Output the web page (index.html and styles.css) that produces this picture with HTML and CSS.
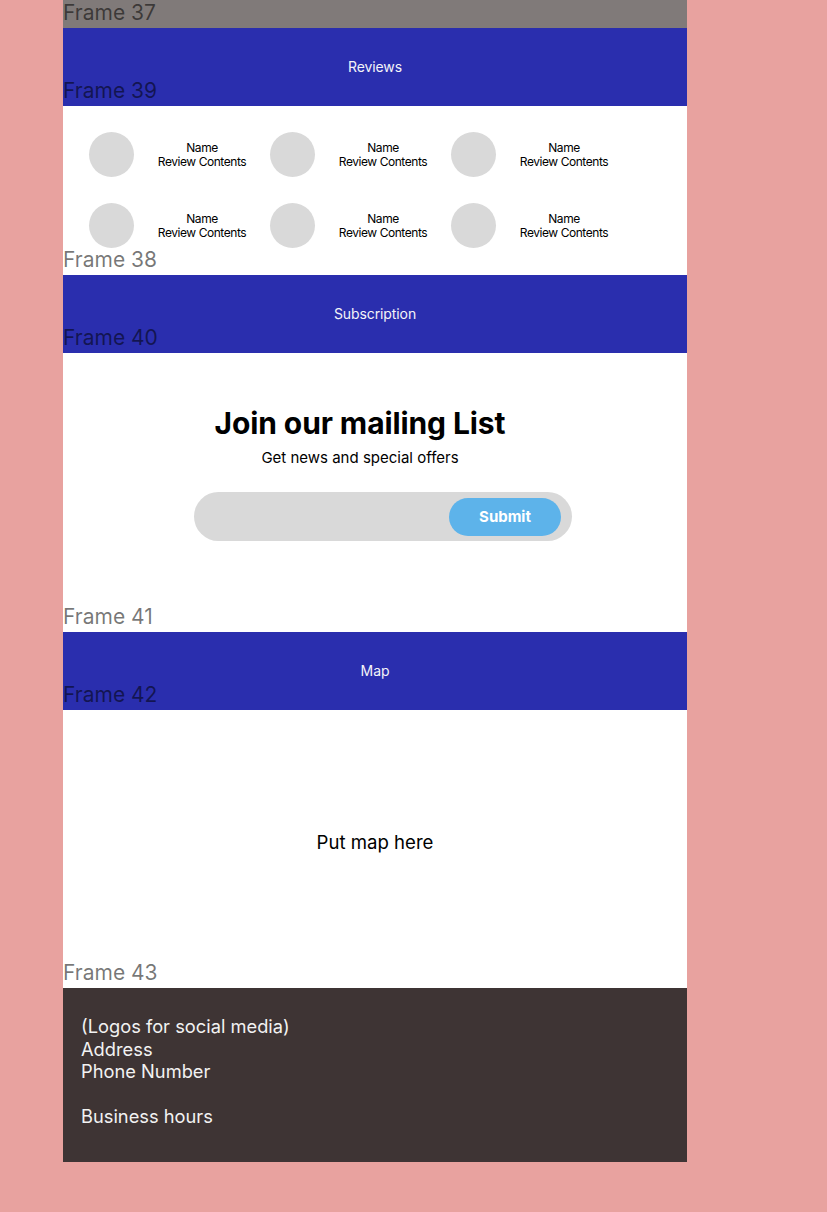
FILE: index.html
```html
<!DOCTYPE html>
<html lang="en">
<head>
<meta charset="utf-8">
<title>Frames</title>
<link rel="stylesheet" href="styles.css">
</head>
<body>
<div class="canvas">
  <div class="top-band"></div>

  <section class="frame bar">
    <span class="frame-label">Frame 37</span>
    <span class="bar-title">Reviews</span>
  </section>

  <section class="frame reviews">
    <span class="frame-label">Frame 39</span>
    <div class="review-grid">
      <div class="review"><div class="avatar"></div><div class="review-text"><span>Name</span><span>Review Contents</span></div></div>
      <div class="review"><div class="avatar"></div><div class="review-text"><span>Name</span><span>Review Contents</span></div></div>
      <div class="review"><div class="avatar"></div><div class="review-text"><span>Name</span><span>Review Contents</span></div></div>
      <div class="review"><div class="avatar"></div><div class="review-text"><span>Name</span><span>Review Contents</span></div></div>
      <div class="review"><div class="avatar"></div><div class="review-text"><span>Name</span><span>Review Contents</span></div></div>
      <div class="review"><div class="avatar"></div><div class="review-text"><span>Name</span><span>Review Contents</span></div></div>
    </div>
  </section>

  <section class="frame bar">
    <span class="frame-label">Frame 38</span>
    <span class="bar-title">Subscription</span>
  </section>

  <section class="frame subscribe">
    <span class="frame-label">Frame 40</span>
    <div class="subscribe-text">
      <h2 class="subscribe-title">Join our mailing List</h2>
      <p class="subscribe-sub">Get news and special offers</p>
    </div>
    <form class="subscribe-form">
      <input class="subscribe-input" type="email" aria-label="Email">
      <button class="subscribe-btn" type="button">Submit</button>
    </form>
  </section>

  <section class="frame bar">
    <span class="frame-label">Frame 41</span>
    <span class="bar-title">Map</span>
  </section>

  <section class="frame map">
    <span class="frame-label">Frame 42</span>
    <p class="map-text">Put map here</p>
  </section>

  <footer class="frame footer">
    <span class="frame-label">Frame 43</span>
    <p>(Logos for social media)</p>
    <p>Address</p>
    <p>Phone Number</p>
    <p>&nbsp;</p>
    <p>Business hours</p>
  </footer>
</div>
</body>
</html>
```

FILE: styles.css
```css
* { box-sizing: border-box; }

html, body {
  margin: 0;
  padding: 0;
  background: #e8a29f;
  font-family: Inter, "Noto Sans", sans-serif;
}

.canvas {
  width: 624px;
  margin-left: 63px;
  display: flex;
  flex-direction: column;
}

.top-band {
  height: 28px;
  background: #807a79;
}

.frame {
  position: relative;
}

.frame-label {
  position: absolute;
  left: 0;
  bottom: calc(100% + 3px);
  font-size: 21px;
  line-height: 24px;
  color: rgba(0, 0, 0, 0.54);
  white-space: nowrap;
  z-index: 2;
}

.bar {
  height: 78px;
  background: #2a2eae;
  display: flex;
  align-items: center;
  justify-content: center;
  padding-bottom: 2px;
}

.bar-title {
  color: #f4f4f8;
  font-size: 14px;
  line-height: 17px;
  letter-spacing: -0.1px;
}

.reviews {
  background: #fff;
  height: 169px;
  padding: 26px 0 0 26px;
}

.review-grid {
  display: grid;
  grid-template-columns: repeat(3, 181px);
  row-gap: 26px;
}

.review {
  display: flex;
  align-items: center;
}

.avatar {
  width: 45px;
  height: 45px;
  border-radius: 50%;
  background: #d9d9d9;
  flex: none;
}

.review-text {
  width: 136px;
  display: flex;
  flex-direction: column;
  align-items: center;
  font-size: 12px;
  line-height: 14px;
  letter-spacing: -0.45px;
  color: #000;
}

.subscribe {
  background: #fff;
  height: 279px;
  padding-top: 52px;
  display: flex;
  flex-direction: column;
}

.subscribe-text {
  padding-right: 30px;
  text-align: center;
}

.subscribe-title {
  margin: 0;
  font-size: 30px;
  line-height: 36px;
  font-weight: 700;
  letter-spacing: -0.1px;
  color: #000;
}

.subscribe-sub {
  margin: 8px 0 0;
  font-size: 15px;
  line-height: 18px;
  color: #000;
}

.subscribe-form {
  margin: 25px 0 0 131px;
  width: 378px;
  height: 49px;
  border-radius: 25px;
  background: #d9d9d9;
  display: flex;
  align-items: center;
  justify-content: space-between;
  padding: 0 11px 0 0;
}

.subscribe-input {
  flex: 1;
  height: 100%;
  border: 0;
  background: transparent;
  outline: none;
  padding-left: 20px;
}

.subscribe-btn {
  width: 112px;
  height: 38px;
  border: 0;
  border-radius: 19px;
  background: #5db3ea;
  color: #fff;
  font-family: Inter, "Noto Sans", sans-serif;
  font-size: 15px;
  font-weight: 700;
}

.map {
  background: #fff;
  height: 278px;
  display: flex;
  justify-content: center;
  padding-top: 121px;
}

.map-text {
  margin: 0;
  font-size: 18.6px;
  line-height: 22px;
  color: #000;
}

.footer {
  background: #3e3434;
  height: 174px;
  padding: 27px 18px 0;
  color: #f2f2f2;
  font-size: 18.3px;
  line-height: 22.5px;
}

.footer p {
  margin: 0;
}
```
